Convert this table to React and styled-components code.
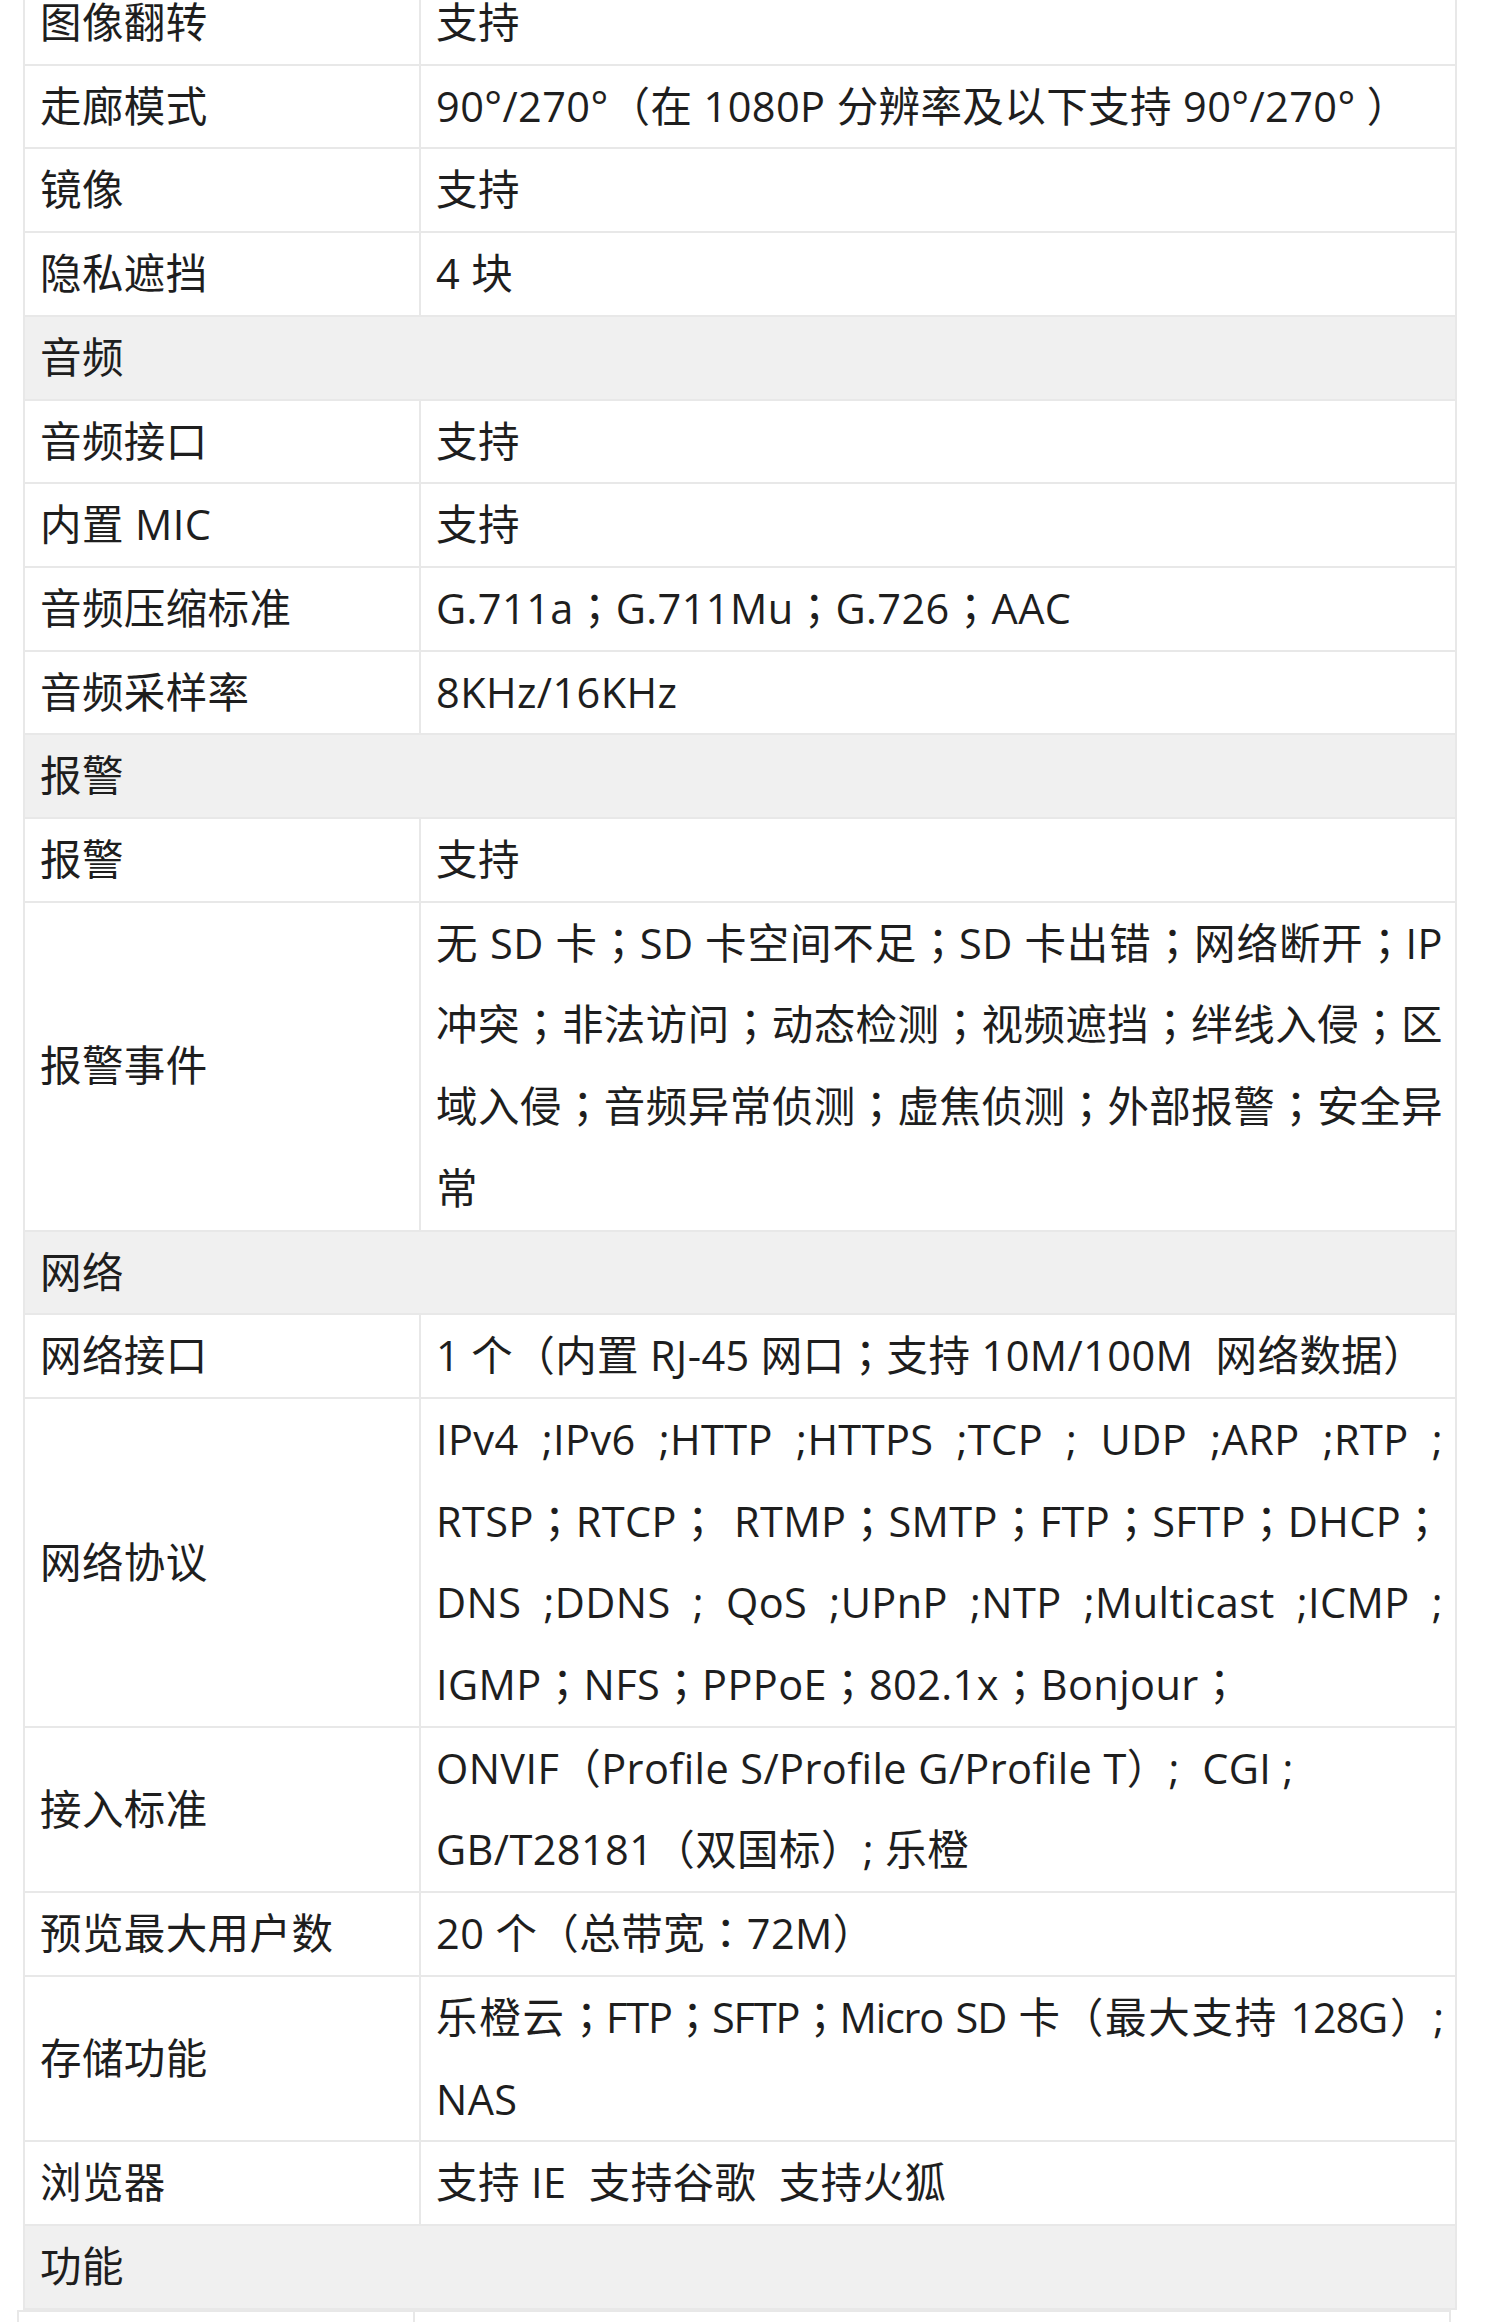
import React from "react";
import styled, { createGlobalStyle } from "styled-components";

const Global = createGlobalStyle`
  html, body { margin: 0; padding: 0; background: #ffffff; }
  body {
    font-family: "Open Sans", "Noto Sans CJK SC", sans-serif;
    color: #1e1e1e;
    overflow: hidden;
  }
`;

const Page = styled.div`
  width: 1500px;
  height: 2322px;
  overflow: hidden;
  background: #ffffff;
`;

const Table = styled.table`
  border-collapse: collapse;
  table-layout: fixed;
  width: 1434px;
  margin: ${(p) => (p.$tail ? "0 0 0 17px" : "-20px 0 0 23px")};
  font-size: 41.5px;
  letter-spacing: 0.4px;
  line-height: 81.7px;
`;

const Row = styled.tr``;

const Cell = styled.td`
  border: 2px solid #e8e8e8;
  padding: 0 12px 0 15px;
  vertical-align: middle;
  background: ${(p) => (p.$section ? "#f0f0f0" : "#ffffff")};
  white-space: nowrap;
  overflow: hidden;
`;

const ValueCell = styled(Cell)`
  white-space: normal;
  text-align: left;
`;

const Line = styled.div`
  text-align: ${(p) => (p.$fill ? "justify" : "left")};
  text-align-last: ${(p) => (p.$fill ? "justify" : "left")};
  white-space: ${(p) => (p.$fill ? "normal" : "pre")};
  letter-spacing: ${(p) => (p.$tight ? "-1.2px" : "inherit")};
`;

const Punct = styled.span`
  font-family: "Noto Sans CJK TC", "Noto Sans CJK SC", sans-serif;
  line-height: 1;
`;

function withPunct(text) {
  return text.split(/([；：（）])/).map((part, i) =>
    /^[；：（）]$/.test(part) ? <Punct key={i}>{part}</Punct> : part
  );
}

const rows = [
  { k: "图像翻转", v: ["支持"] },
  { k: "走廊模式", v: ["90°/270°（在 1080P 分辨率及以下支持 90°/270° ）"] },
  { k: "镜像", v: ["支持"] },
  { k: "隐私遮挡", v: ["4 块"] },
  { section: "音频" },
  { k: "音频接口", v: ["支持"] },
  { k: "内置 MIC", v: ["支持"] },
  { k: "音频压缩标准", v: ["G.711a；G.711Mu；G.726；AAC"] },
  { k: "音频采样率", v: ["8KHz/16KHz"] },
  { section: "报警" },
  { k: "报警", v: ["支持"] },
  {
    k: "报警事件",
    fill: 3,
    v: [
      "无 SD 卡；SD 卡空间不足；SD 卡出错；网络断开；IP",
      "冲突；非法访问；动态检测；视频遮挡；绊线入侵；区",
      "域入侵；音频异常侦测；虚焦侦测；外部报警；安全异",
      "常",
    ],
  },
  { section: "网络" },
  { k: "网络接口", v: ["1 个（内置 RJ-45 网口；支持 10M/100M  网络数据）"] },
  {
    k: "网络协议",
    fill: 3,
    v: [
      "IPv4 ;IPv6 ;HTTP ;HTTPS ;TCP ;  UDP ;ARP ;RTP   ;",
      "RTSP；RTCP；  RTMP；SMTP；FTP；SFTP；DHCP；",
      "DNS ;DDNS ;  QoS ;UPnP ;NTP ;Multicast ;ICMP ;",
      "IGMP；NFS；PPPoE；802.1x；Bonjour；",
    ],
  },
  {
    k: "接入标准",
    v: ["ONVIF（Profile S/Profile G/Profile T）;  CGI ;", "GB/T28181（双国标）; 乐橙"],
  },
  { k: "预览最大用户数", v: ["20 个（总带宽：72M）"] },
  {
    k: "存储功能",
    fill: 1,
    tight: 1,
    v: ["乐橙云；FTP；SFTP；Micro SD 卡（最大支持 128G）;", "NAS"],
  },
  { k: "浏览器", v: ["支持 IE  支持谷歌  支持火狐"] },
  { section: "功能" },
];

function Cols() {
  return (
    <colgroup>
      <col style={{ width: "396px" }} />
      <col />
    </colgroup>
  );
}

export default function App() {
  return (
    <Page>
      <Global />
      <Table>
        <Cols />
        <tbody>
          {rows.map((r, i) =>
            r.section ? (
              <Row key={i}>
                <Cell $section colSpan={2}>
                  {r.section}
                </Cell>
              </Row>
            ) : (
              <Row key={i}>
                <Cell>{r.k}</Cell>
                <ValueCell>
                  {r.v.map((line, j) => (
                    <Line
                      key={j}
                      $fill={r.fill && j < r.fill}
                      $tight={r.tight && j < r.tight}
                    >
                      {withPunct(line)}
                    </Line>
                  ))}
                </ValueCell>
              </Row>
            )
          )}
        </tbody>
      </Table>
      <Table $tail>
        <Cols />
        <tbody>
          <Row>
            <Cell>&nbsp;</Cell>
            <ValueCell>&nbsp;</ValueCell>
          </Row>
        </tbody>
      </Table>
    </Page>
  );
}
